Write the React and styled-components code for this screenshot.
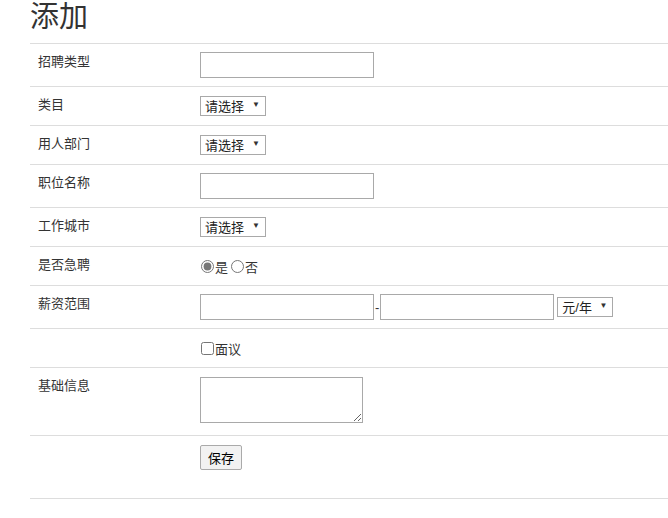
import React from "react";
import styled, { createGlobalStyle } from "styled-components";

const Global = createGlobalStyle`
  body { margin: 0; background: #fff; color: #333; font-family: "Liberation Sans", "Noto Sans CJK SC", sans-serif; font-size: 13px; overflow: hidden; }
`;

const Page = styled.div`
  padding-left: 30px;
  width: 700px;
`;

const Title = styled.h1`
  margin: 0;
  height: 43px;
  font-size: 29px;
  font-weight: 400;
  line-height: 34px;
  color: #333;
`;

const Row = styled.div`
  display: grid;
  grid-template-columns: 162px 1fr;
  padding: 8px 8px;
  height: ${(p) => p.h - 17}px;
  border-top: 1px solid #ddd;
  &:last-child { border-bottom: 1px solid #ddd; }
`;

const Label = styled.div`
  line-height: 20px;
  color: #333;
`;

const Field = styled.div`
  display: flex;
  align-items: ${(p) => (p.top ? "flex-start" : "center")};
  gap: 1px;
`;

const Input = styled.input`
  box-sizing: border-box;
  width: 174px;
  height: 26px;
  border: 1px solid #a9a9a9;
  margin: 0;
`;

const SelectBox = styled.div`
  position: relative;
  display: inline-block;
  margin-left: ${(p) => p.ml || 0}px;
  &::after {
    content: "▼";
    position: absolute;
    right: 6px;
    top: 4px;
    font-size: 8px;
    color: #333;
    pointer-events: none;
  }
`;

const Select = styled.select`
  appearance: none;
  height: 20px;
  margin: 0;
  font: 13px "Liberation Sans", "Noto Sans CJK SC", sans-serif;
  border: 1px solid #a9a9a9;
  background: #fff;
  color: #222;
  padding: 0 20px 0 4px;
`;

const Choice = styled.label`
  display: inline-flex;
  align-items: center;
  margin-right: 1px;
  input { margin: 0 1px 0 1px; accent-color: #777; }
`;

const Area = styled.textarea`
  box-sizing: border-box;
  width: 163px;
  height: 46px;
  border: 1px solid #a9a9a9;
  margin: 1px 0 0;
`;

const Button = styled.button`
  height: 25px;
  padding: 0 7px;
  margin-top: 1px;
  font: 13px "Liberation Sans", "Noto Sans CJK SC", sans-serif;
  border: 1px solid #aaa;
  background: #f2f2f2;
  border-radius: 2px;
`;

const Pick = ({ label = "请选择", ml }) => (
  <SelectBox ml={ml}>
    <Select defaultValue="a">
      <option value="a">{label}</option>
    </Select>
  </SelectBox>
);

export default function App() {
  return (
    <Page>
      <Global />
      <Title>添加</Title>
      <Row h={43}><Label>招聘类型</Label><Field><Input /></Field></Row>
      <Row h={39}><Label>类目</Label><Field><Pick /></Field></Row>
      <Row h={39}><Label>用人部门</Label><Field><Pick /></Field></Row>
      <Row h={43}><Label>职位名称</Label><Field><Input /></Field></Row>
      <Row h={39}><Label>工作城市</Label><Field><Pick /></Field></Row>
      <Row h={39}>
        <Label>是否急聘</Label>
        <Field>
          <Choice><input type="radio" name="u" defaultChecked />是</Choice>
          <Choice><input type="radio" name="u" />否</Choice>
        </Field>
      </Row>
      <Row h={43}>
        <Label>薪资范围</Label>
        <Field>
          <Input />-<Input />
          <Pick label="元/年" ml={2} />
        </Field>
      </Row>
      <Row h={39}>
        <Label />
        <Field><Choice><input type="checkbox" />面议</Choice></Field>
      </Row>
      <Row h={68}><Label>基础信息</Label><Field top><Area /></Field></Row>
      <Row h={63}><Label /><Field top><Button>保存</Button></Field></Row>
    </Page>
  );
}
